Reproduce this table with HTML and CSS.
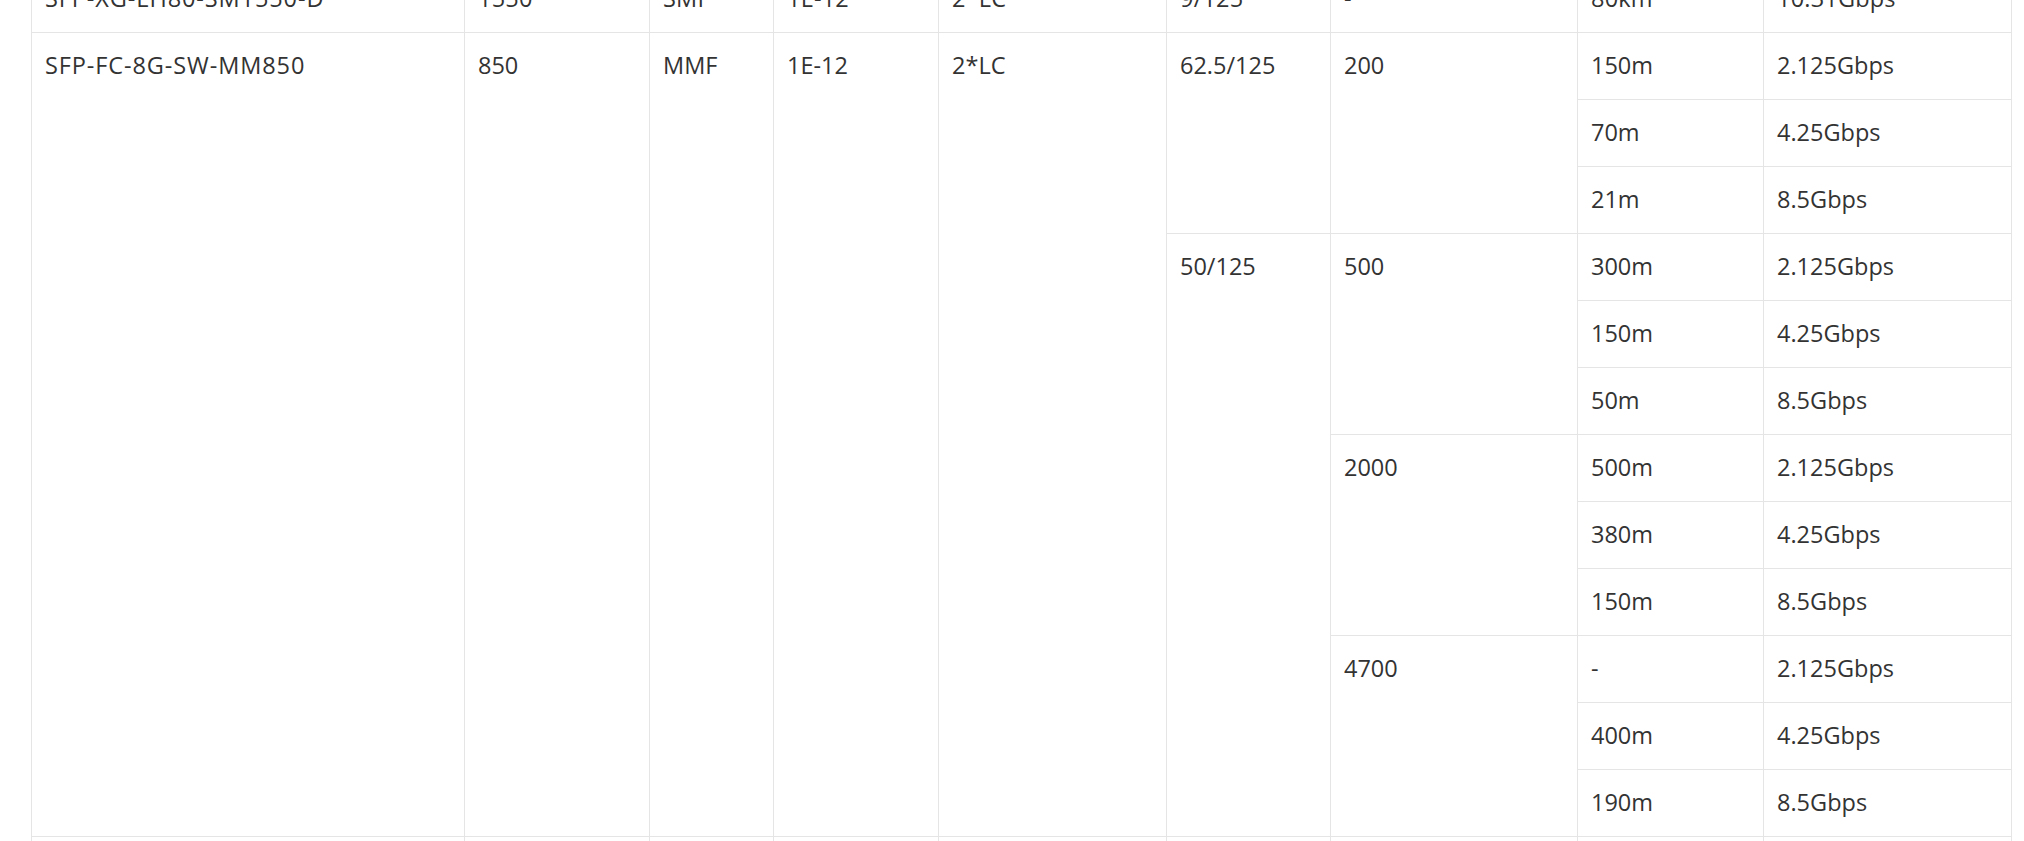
FILE: index.html
```html
<!DOCTYPE html>
<html lang="en">
<head>
<meta charset="utf-8">
<title>Module specifications</title>
<link rel="stylesheet" href="styles.css">
</head>
<body>
<div class="page">
  <table class="spec">
    <colgroup>
      <col class="c1"><col class="c2"><col class="c3"><col class="c4"><col class="c5"><col class="c6"><col class="c7"><col class="c8"><col class="c9">
    </colgroup>
    <tbody>
      <tr class="prev-row">
        <td class="model">SFP-XG-LH80-SM1550-D</td><td>1550</td><td>SMF</td><td>1E-12</td><td>2*LC</td><td>9/125</td><td>-</td><td>80km</td><td>10.31Gbps</td>
      </tr>
      <tr>
        <td class="model" rowspan="12">SFP-FC-8G-SW-MM850</td>
        <td rowspan="12">850</td>
        <td rowspan="12">MMF</td>
        <td rowspan="12">1E-12</td>
        <td rowspan="12">2*LC</td>
        <td rowspan="3">62.5/125</td>
        <td rowspan="3">200</td>
        <td>150m</td><td>2.125Gbps</td>
      </tr>
      <tr><td>70m</td><td>4.25Gbps</td></tr>
      <tr><td>21m</td><td>8.5Gbps</td></tr>
      <tr>
        <td rowspan="9">50/125</td>
        <td rowspan="3">500</td>
        <td>300m</td><td>2.125Gbps</td>
      </tr>
      <tr><td>150m</td><td>4.25Gbps</td></tr>
      <tr><td>50m</td><td>8.5Gbps</td></tr>
      <tr>
        <td rowspan="3">2000</td>
        <td>500m</td><td>2.125Gbps</td>
      </tr>
      <tr><td>380m</td><td>4.25Gbps</td></tr>
      <tr><td>150m</td><td>8.5Gbps</td></tr>
      <tr>
        <td rowspan="3">4700</td>
        <td>-</td><td>2.125Gbps</td>
      </tr>
      <tr><td>400m</td><td>4.25Gbps</td></tr>
      <tr><td>190m</td><td>8.5Gbps</td></tr>
      <tr>
        <td>&nbsp;</td><td>&nbsp;</td><td>&nbsp;</td><td>&nbsp;</td><td>&nbsp;</td><td>&nbsp;</td><td>&nbsp;</td><td>&nbsp;</td><td>&nbsp;</td>
      </tr>
    </tbody>
  </table>
</div>
</body>
</html>
```

FILE: styles.css
```css
html, body {
  margin: 0;
  padding: 0;
  background: #ffffff;
}

body {
  font-family: "Open Sans", "Noto Sans", "Liberation Sans", sans-serif;
  color: #333333;
  overflow: hidden;
}

.page {
  padding-left: 31px;
  width: 1980px;
}

.spec {
  margin-top: -35px;
  border-collapse: collapse;
  table-layout: fixed;
  width: 1980px;
}

.spec .c1 { width: 433px; }
.spec .c2 { width: 185px; }
.spec .c3 { width: 124px; }
.spec .c4 { width: 165px; }
.spec .c5 { width: 228px; }
.spec .c6 { width: 164px; }
.spec .c7 { width: 247px; }
.spec .c8 { width: 186px; }
.spec .c9 { width: 248px; }

.spec tr {
  height: 67px;
}

.spec td {
  border: 1px solid #e5e5e5;
  padding: 15px 13px 16px;
  height: 35px;
  line-height: 35px;
  font-size: 23.5px;
  vertical-align: top;
  text-align: left;
  white-space: nowrap;
  box-sizing: content-box;
}

.spec .prev-row td {
  letter-spacing: 0.2px;
}

.spec td.model {
  letter-spacing: 0.9px;
}
```
